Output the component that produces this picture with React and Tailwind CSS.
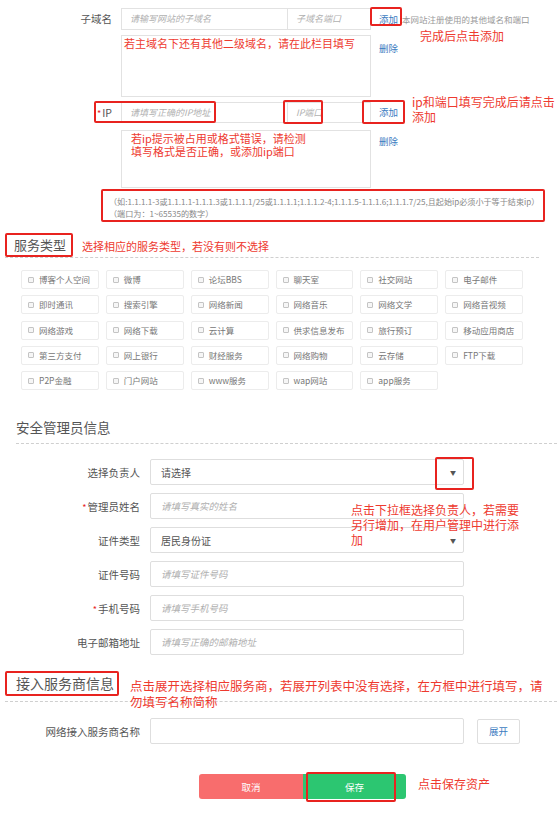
import React from 'react'

const SERVICES = [
  '博客个人空间', '微博', '论坛BBS', '聊天室', '社交网站', '电子邮件',
  '即时通讯', '搜索引擎', '网络新闻', '网络音乐', '网络文学', '网络音视频',
  '网络游戏', '网络下载', '云计算', '供求信息发布', '旅行预订', '移动应用商店',
  '第三方支付', '网上银行', '财经服务', '网络购物', '云存储', 'FTP下载',
  'P2P金融', '门户网站', 'www服务', 'wap网站', 'app服务',
]

const MANAGER_ROWS = [
  { label: '选择负责人', value: '请选择', select: true },
  { label: '管理员姓名', ph: '请填写真实的姓名', req: true },
  { label: '证件类型', value: '居民身份证', select: true },
  { label: '证件号码', ph: '请填写证件号码' },
  { label: '手机号码', ph: '请填写手机号码', req: true },
  { label: '电子邮箱地址', ph: '请填写正确的邮箱地址' },
]

// red outline drawn over the screenshot
function RedBox({ l, t, w, h }) {
  return (
    <div
      className="absolute border-2 border-[#e8231f] rounded-[2px] pointer-events-none"
      style={{ left: l, top: t, width: w, height: h }}
    />
  )
}

function Note({ l, t, children, className = '' }) {
  return (
    <div className={`absolute text-[#ee3a2f] whitespace-nowrap ${className}`} style={{ left: l, top: t }}>
      {children}
    </div>
  )
}

function Row({ label, req, children }) {
  return (
    <div className="flex items-center h-[26px]">
      <div className="w-[140px] text-right text-[10.5px] text-[#555]">
        {req && <span className="text-[#e8231f] text-[9px] mr-[1px]">*</span>}
        {label}
      </div>
      <div className="ml-[10px]">{children}</div>
    </div>
  )
}

export default function App() {
  return (
    <div
      className="relative w-[557px] h-[819px] overflow-hidden bg-white"
      style={{ fontFamily: '"Noto Sans CJK SC", "Noto Sans", sans-serif' }}
    >
      {/* 子域名 / IP */}
      <div className="pt-[8px]">
        <div className="flex items-center h-[22px]">
          <div className="w-[112px] text-right text-[10.5px] text-[#555]">子域名</div>
          <div className="ml-[9px] w-[250px] h-[22px] border border-[#e2e2e2] flex text-[9px] italic text-[#b0b0b0]">
            <div className="w-[166px] border-r border-[#e2e2e2] pl-[8px] flex items-center">请输写网站的子域名</div>
            <div className="pl-[8px] flex items-center">子域名端口</div>
          </div>
          <div className="w-[31px] pl-[8px] text-[9.5px] text-[#3b7bbf]">添加</div>
          <div className="text-[8.5px] text-[#999] whitespace-nowrap">本网站注册使用的其他域名和端口</div>
        </div>

        <div className="flex mt-[5px]">
          <div className="w-[121px]" />
          <div className="w-[250px] h-[62px] border border-[#e2e2e2] pl-[2px] text-[11px] leading-[14px] text-[#ee3a2f]">
            若主域名下还有其他二级域名，请在此栏目填写
          </div>
          <div className="ml-[8px] mt-[6px] text-[9.5px] text-[#3b7bbf]">删除</div>
        </div>

        <div className="flex items-center h-[21px] mt-[5px]">
          <div className="w-[112px] text-right text-[10.5px] text-[#555]">
            <span className="text-[#e8231f] text-[9px] mr-[1px]">*</span>IP
          </div>
          <div className="ml-[9px] w-[250px] h-[21px] border border-[#e2e2e2] flex text-[9px] italic text-[#b0b0b0]">
            <div className="w-[166px] border-r border-[#e2e2e2] pl-[8px] flex items-center">请填写正确的IP地址</div>
            <div className="pl-[8px] flex items-center">IP端口</div>
          </div>
          <div className="pl-[8px] text-[9.5px] text-[#3b7bbf]">添加</div>
        </div>

        <div className="flex mt-[7px]">
          <div className="w-[121px]" />
          <div className="w-[250px] h-[58px] border border-[#e2e2e2] pl-[9px] pt-[1px] text-[11px] leading-[13px] text-[#ee3a2f]">
            若ip提示被占用或格式错误，请检测
            <br />
            填写格式是否正确，或添加ip端口
          </div>
          <div className="ml-[8px] mt-[4px] text-[9.5px] text-[#3b7bbf]">删除</div>
        </div>

        <div className="ml-[101px] mt-[1px] w-[444px] h-[33px] border-2 border-[#e8231f] rounded-[2px] pl-[6px] pt-[5px] text-[8.1px] leading-[11.5px] text-[#888] whitespace-nowrap">
          （如:1.1.1.1-3或1.1.1.1-1.1.1.3或1.1.1.1/25或1.1.1.1;1.1.1.2-4;1.1.1.5-1.1.1.6;1.1.1.7/25,且起始ip必须小于等于结束ip）
          <br />
          （端口为：1~65535的数字）
        </div>
      </div>

      {/* 服务类型 */}
      <div className="mt-[11px] ml-[5px] w-[534px] flex items-end border-b border-dashed border-[#cfcfcf]">
        <div className="w-[68px] h-[24px] border-2 border-[#e8231f] rounded-[2px] pl-[7px] flex items-center text-[13px] text-[#555]">
          服务类型
        </div>
        <div className="ml-[9px] mb-[3px] text-[11px] text-[#ee3a2f]">选择相应的服务类型，若没有则不选择</div>
      </div>

      <div className="ml-[21px] mt-[12px] w-[502px] grid grid-cols-6 gap-x-[7px] gap-y-[6.3px]">
        {SERVICES.map(s => (
          <div key={s} className="h-[19px] border border-[#ececec] rounded-[2px] flex items-center pl-[6px] text-[8.5px] text-[#777]">
            <span className="w-[6px] h-[6px] border border-[#c4c4c4] bg-[#f6f6f6] rounded-[1px] mr-[5px] shrink-0" />
            {s}
          </div>
        ))}
      </div>

      {/* 安全管理员信息 */}
      <div className="mt-[27px] ml-[16px] pb-[6px] border-b border-dashed border-[#cfcfcf] text-[13.5px] text-[#555]">
        安全管理员信息
      </div>

      <div className="mt-[15px] flex flex-col gap-[8px]">
        {MANAGER_ROWS.map(r => (
          <Row key={r.label} label={r.label} req={r.req}>
            <div className="w-[314px] h-[26px] border border-[#dedede] rounded-[2px] flex items-center justify-between pl-[10px] pr-[7px]">
              {r.select ? (
                <span className="text-[10px] text-[#555]">{r.value}</span>
              ) : (
                <span className="text-[9.5px] italic text-[#b0b0b0]">{r.ph}</span>
              )}
              {r.select && <span className="text-[6px] text-[#555]">▼</span>}
            </div>
          </Row>
        ))}
      </div>

      {/* 接入服务商信息 */}
      <div className="mt-[16px] ml-[5px] pb-[5px] flex items-end border-b border-dashed border-[#cfcfcf]">
        <div className="w-[114px] h-[25px] border-2 border-[#e8231f] rounded-[2px] pl-[9px] flex items-center text-[14px] text-[#555]">
          接入服务商信息
        </div>
      </div>

      <div className="mt-[16px] flex items-center">
        <Row label="网络接入服务商名称">
          <div className="w-[314px] h-[26px] border border-[#dedede] rounded-[2px]" />
        </Row>
        <div className="ml-[13px] w-[43px] h-[25px] border border-[#dedede] rounded-[2px] flex items-center justify-center text-[9.5px] text-[#3b7bbf]">
          展开
        </div>
      </div>

      <div className="mt-[30px] ml-[199px] flex">
        <button className="w-[104px] h-[25px] bg-[#f86d6d] rounded-l-[3px] text-white text-[9.5px]">取消</button>
        <button className="w-[103px] h-[25px] bg-[#2cc671] rounded-r-[3px] text-white text-[9.5px]">保存</button>
      </div>

      {/* annotations */}
      <RedBox l={370} t={7} w={32} h={19} />
      <Note l={420} t={27} className="text-[12px]">完成后点击添加</Note>
      <RedBox l={94} t={101} w={122} h={22} />
      <RedBox l={283} t={100} w={40} h={24} />
      <RedBox l={362} t={100} w={43} h={24} />
      <Note l={412} t={94} className="text-[12px] leading-[15px]">
        ip和端口填写完成后请点击
        <br />
        添加
      </Note>
      <RedBox l={435} t={457} w={39} h={33} />
      <Note l={351} t={502} className="text-[12px] leading-[15px]">
        点击下拉框选择负责人，若需要
        <br />
        另行增加，在用户管理中进行添
        <br />
        加
      </Note>
      <Note l={130} t={678} className="text-[12.5px] leading-[16px]">
        点击展开选择相应服务商，若展开列表中没有选择，在方框中进行填写，请
        <br />
        勿填写名称简称
      </Note>
      <RedBox l={306} t={772} w={90} h={30} />
      <Note l={418} t={775} className="text-[12px]">点击保存资产</Note>
    </div>
  )
}
